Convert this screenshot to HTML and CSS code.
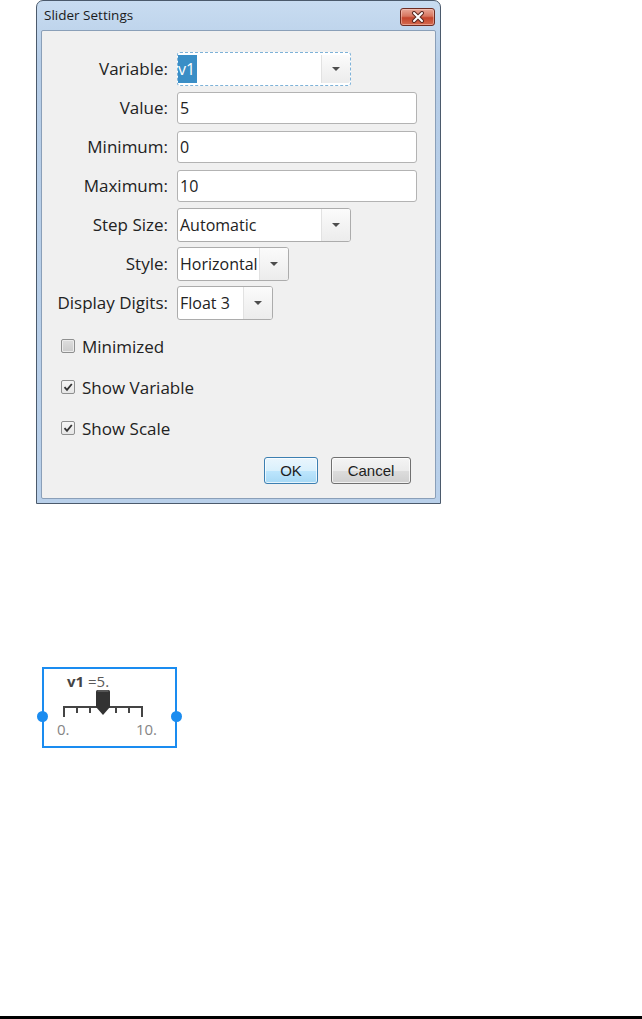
FILE: index.html
```html
<!DOCTYPE html>

<html lang="en">

<head>

    <meta charset="UTF-8">

    <meta name="viewport" content="width=device-width, initial-scale=1.0">

    <title>Slider Settings</title>

    <link rel="stylesheet" href="styles.css">

</head>

<body>
    <div class="page">
        <div class="window">
            <div class="titlebar">
                <span class="title">Slider Settings</span>
                <div class="close">
                    <svg width="16" height="12" viewBox="0 0 16 12">
                        <path d="M4 2 L12 10 M12 2 L4 10" stroke="#5b2a22" stroke-width="4" stroke-linecap="round"/>
                        <path d="M4 2 L12 10 M12 2 L4 10" stroke="#ffffff" stroke-width="2" stroke-linecap="round"/>
                    </svg>
                </div>
            </div>
            <div class="client">
                <div class="form">
                    <span class="label">Variable:</span>
                    <div class="combo wide focus">
                        <span class="combo-text"><span class="sel">v1</span></span>
                        <span class="drop"><i class="arrow"></i></span>
                    </div>

                    <span class="label">Value:</span>
                    <div class="field">5</div>

                    <span class="label">Minimum:</span>
                    <div class="field">0</div>

                    <span class="label">Maximum:</span>
                    <div class="field">10</div>

                    <span class="label">Step Size:</span>
                    <div class="combo wide">
                        <span class="combo-text">Automatic</span>
                        <span class="drop"><i class="arrow"></i></span>
                    </div>

                    <span class="label">Style:</span>
                    <div class="combo style">
                        <span class="combo-text">Horizontal</span>
                        <span class="drop"><i class="arrow"></i></span>
                    </div>

                    <span class="label">Display Digits:</span>
                    <div class="combo digits">
                        <span class="combo-text">Float 3</span>
                        <span class="drop"><i class="arrow"></i></span>
                    </div>
                </div>

                <div class="checks">
                    <div class="check-row">
                        <span class="box off"></span>
                        <span>Minimized</span>
                    </div>
                    <div class="check-row">
                        <span class="box">
                            <svg width="12" height="12" viewBox="0 0 12 12"><path d="M2.5 6.2 L5 8.8 L9.8 3" stroke="#333" stroke-width="1.8" fill="none"/></svg>
                        </span>
                        <span>Show Variable</span>
                    </div>
                    <div class="check-row">
                        <span class="box">
                            <svg width="12" height="12" viewBox="0 0 12 12"><path d="M2.5 6.2 L5 8.8 L9.8 3" stroke="#333" stroke-width="1.8" fill="none"/></svg>
                        </span>
                        <span>Show Scale</span>
                    </div>
                </div>

                <div class="buttons">
                    <div class="btn ok">OK</div>
                    <div class="btn cancel">Cancel</div>
                </div>
            </div>
        </div>

        <div class="slider">
            <span class="handle left"></span>
            <span class="handle right"></span>
            <div class="slider-label"><b>v1</b> =5.</div>
            <svg class="scale" width="130" height="28" viewBox="0 0 130 28">
                <g stroke="#444" stroke-width="2">
                    <line x1="18" y1="17" x2="98" y2="17"/>
                    <line x1="19" y1="16" x2="19" y2="27"/>
                    <line x1="32" y1="17" x2="32" y2="23"/>
                    <line x1="45" y1="17" x2="45" y2="23"/>
                    <line x1="71" y1="17" x2="71" y2="23"/>
                    <line x1="84" y1="17" x2="84" y2="23"/>
                    <line x1="97" y1="16" x2="97" y2="27"/>
                </g>
                <path d="M51 1.5 Q51 0 52.5 0 L63.5 0 Q65 0 65 1.5 L65 17 L58 25 L51 17 Z" fill="#333"/>
                <path d="M52.5 1 L63.5 1" stroke="#7a7a7a" stroke-width="1"/>
            </svg>
            <div class="scale-labels">
                <span>0.</span>
                <span>10.</span>
            </div>
        </div>

        <div class="footer"></div>
    </div>
</body>

</html>
```

FILE: styles.css
```css
body {
    margin: 0;
    background: #ffffff;
    font-family: "Open Sans", "Liberation Sans", sans-serif;
    color: #222222;
}

.page {
    height: 1019px;
    display: flex;
    flex-direction: column;
}

/* dialog window */

.window {
    margin-left: 36px;
    width: 405px;
    height: 504px;
    box-sizing: border-box;
    border: 1px solid #4b5a6c;
    border-radius: 7px 7px 0 0;
    background: linear-gradient(#c8dcf1, #b6cde7 60px, #b9d0ea);
    padding: 0 4px 4px 4px;
    display: flex;
    flex-direction: column;
}

.titlebar {
    height: 29px;
    display: flex;
    align-items: flex-start;
    justify-content: space-between;
    padding-left: 3px;
}

.title {
    font-size: 13.5px;
    line-height: 29px;
    color: #1b1b1b;
}

.close {
    margin-top: 7px;
    margin-right: 1px;
    width: 35px;
    height: 18px;
    box-sizing: border-box;
    border: 1px solid #6e2c22;
    border-radius: 3px;
    background: linear-gradient(#e9a898, #d7765f 45%, #c4452c 55%, #d46a4f);
    box-shadow: inset 0 0 0 1px rgba(255, 220, 210, 0.45);
    display: flex;
    justify-content: center;
    align-items: center;
}

.client {
    flex: 1;
    border: 1px solid #8a9fb8;
    border-radius: 2px;
    background: #f0f0f0;
    display: flex;
    flex-direction: column;
}

/* form rows */

.form {
    display: grid;
    grid-template-columns: 126px 240px;
    grid-auto-rows: 32px;
    column-gap: 9px;
    row-gap: 7px;
    padding-top: 22px;
    font-size: 17px;
}

.label {
    text-align: right;
    line-height: 32px;
    white-space: nowrap;
}

.field {
    height: 32px;
    box-sizing: border-box;
    border: 1px solid #b3b3b3;
    border-radius: 3px;
    background: #ffffff;
    padding-left: 2px;
    line-height: 30px;
    font-size: 16px;
}

.combo {
    height: 34px;
    align-self: center;
    box-sizing: border-box;
    border: 1px solid #acacac;
    border-radius: 3px;
    background: #ffffff;
    display: flex;
    font-size: 16px;
}

.combo.wide {
    width: 174px;
}

.combo.style {
    width: 112px;
}

.combo.digits {
    width: 96px;
}

.combo.focus {
    border: 1px dashed #7eb2d8;
    padding: 2px 0 2px 0;
}

.combo-text {
    flex: 1;
    padding-left: 2px;
    line-height: 32px;
    white-space: nowrap;
    overflow: hidden;
}

.combo.focus .combo-text {
    line-height: 28px;
    padding-left: 0;
}

.sel {
    display: inline-block;
    background: #3a8ec6;
    color: #ffffff;
    padding-right: 2px;
}

.drop {
    width: 28px;
    border-left: 1px solid #e2e2e2;
    border-radius: 0 2px 2px 0;
    background: linear-gradient(#fbfbfb, #ececec);
    display: flex;
    justify-content: center;
    align-items: center;
}

.arrow {
    width: 0;
    height: 0;
    border-left: 4px solid transparent;
    border-right: 4px solid transparent;
    border-top: 4px solid #4d4d4d;
}

/* checkboxes */

.checks {
    margin-top: 16px;
    padding-left: 19px;
    display: flex;
    flex-direction: column;
    gap: 19px;
    font-size: 17px;
}

.check-row {
    height: 22px;
    display: flex;
    align-items: center;
    gap: 7px;
}

.box {
    width: 14px;
    height: 14px;
    box-sizing: border-box;
    border: 1px solid #8e8f8f;
    border-radius: 2px;
    background: linear-gradient(#f6f6f6, #e6e6e6);
    display: flex;
    justify-content: center;
    align-items: center;
}

.box.off {
    background: linear-gradient(#dedede, #cbcbcb);
    box-shadow: inset 0 0 0 1px #ececec;
}

/* buttons */

.buttons {
    margin-top: 18px;
    padding-right: 24px;
    display: flex;
    justify-content: flex-end;
    gap: 13px;
}

.btn {
    height: 27px;
    box-sizing: border-box;
    border-radius: 3px;
    display: flex;
    justify-content: center;
    align-items: center;
    font-family: "Liberation Sans", Arial, sans-serif;
    font-size: 15px;
    color: #1e1e1e;
    box-shadow: inset 0 0 0 1px rgba(255, 255, 255, 0.7);
}

.btn.ok {
    width: 54px;
    border: 1px solid #3c7fb1;
    background: linear-gradient(#eaf6fd, #d9f0fc 50%, #bee6fd 50%, #a7d9f5);
}

.btn.cancel {
    width: 80px;
    border: 1px solid #707070;
    background: linear-gradient(#f4f4f4, #ebebeb 50%, #dddddd 50%, #cfcfcf);
}

/* slider widget */

.slider {
    position: relative;
    margin-top: 163px;
    margin-left: 42px;
    width: 135px;
    height: 81px;
    box-sizing: border-box;
    border: 2px solid #1a8cf0;
}

.handle {
    position: absolute;
    top: 42px;
    width: 11px;
    height: 11px;
    border-radius: 50%;
    background: #1a8cf0;
}

.handle.left {
    left: -7px;
}

.handle.right {
    right: -7px;
}

.slider-label {
    margin-top: 4px;
    padding-left: 23px;
    height: 17px;
    line-height: 17px;
    font-size: 15px;
    color: #5a5a5a;
}

.slider-label b {
    color: #444444;
}

.scale {
    display: block;
    margin-left: 1px;
}

.scale-labels {
    margin-top: 1px;
    padding: 0 18px 0 13px;
    display: flex;
    justify-content: space-between;
    font-size: 15px;
    line-height: 20px;
    color: #858585;
}

.footer {
    margin-top: auto;
    height: 3px;
    background: #000000;
}
```
